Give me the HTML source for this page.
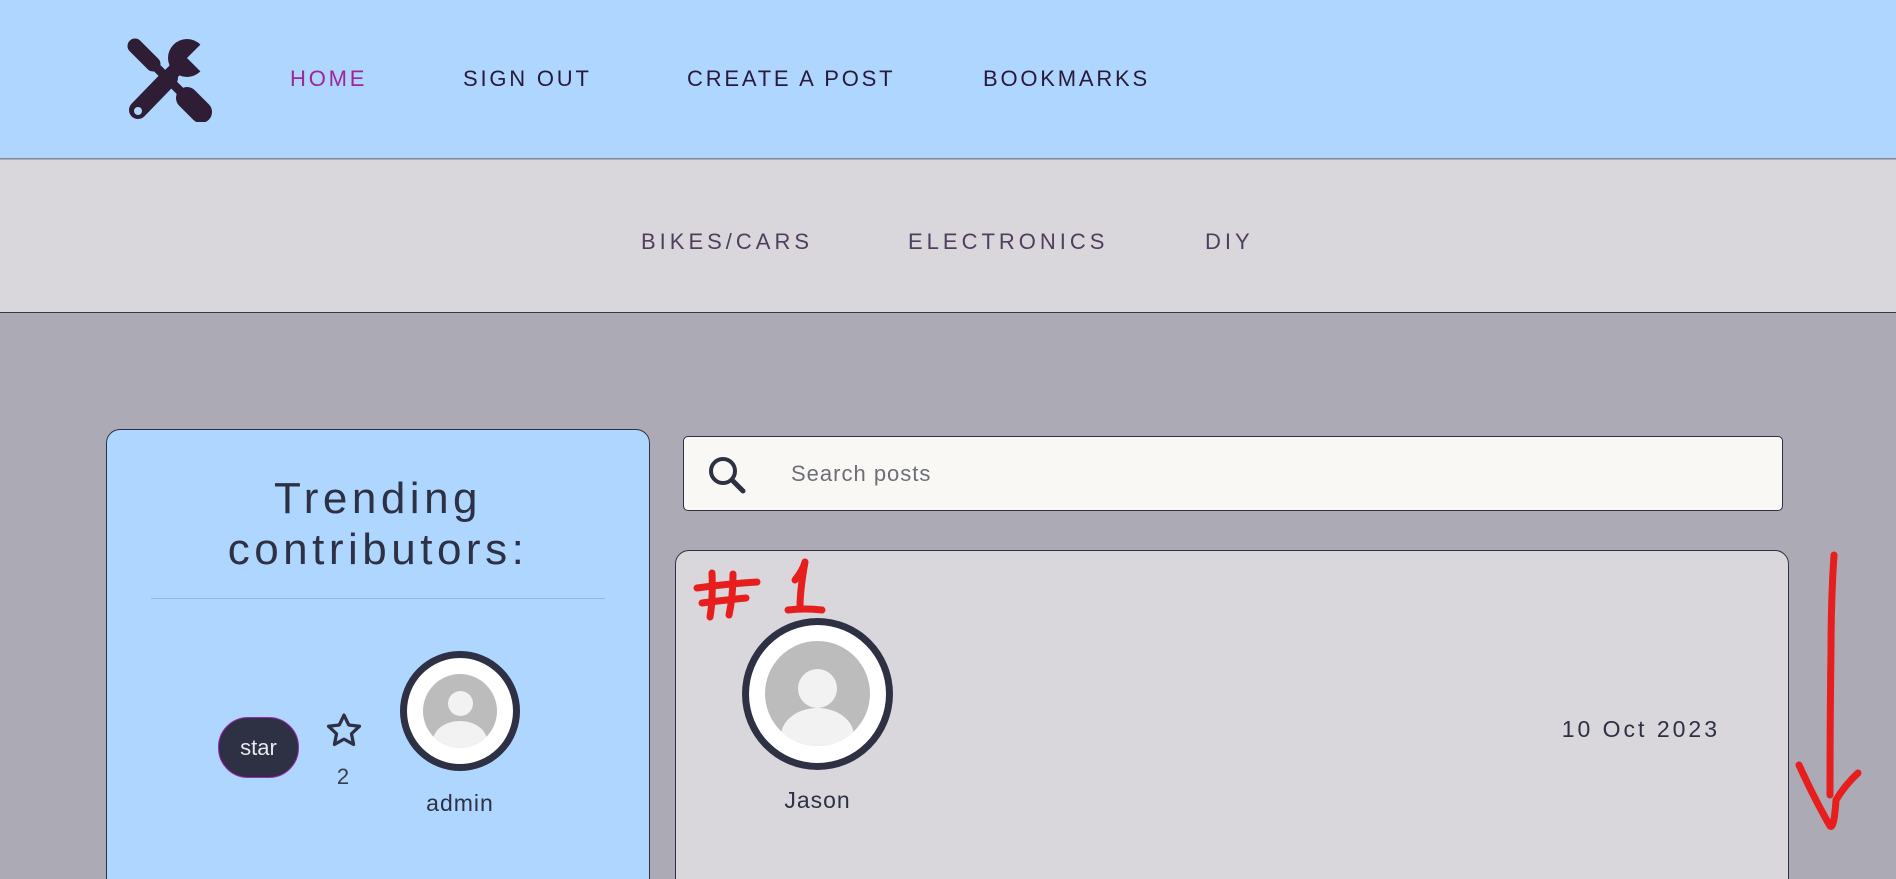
<!DOCTYPE html>
<html><head><meta charset="utf-8"><style>
*{margin:0;padding:0;box-sizing:border-box}
html,body{width:1896px;height:879px;overflow:hidden}
body{background:#acabb5;font-family:"Liberation Sans",sans-serif;position:relative}
#w{position:absolute;left:0;top:0;width:1896px;height:879px;overflow:hidden}
.a{position:absolute}
.nav{font-size:22px;letter-spacing:2.8px;color:#2a1a3a;top:66px}
.sub{font-size:22px;letter-spacing:4px;color:#4f3e5e;top:229px}
.av{position:absolute;border-radius:50%;background:#fff;border:7px solid #2e3044;overflow:hidden}
</style></head><body><div id="w">
<div class="a" style="left:0;top:0;width:1896px;height:159px;background:#aed6ff;border-bottom:1px solid #8a8a99"></div>
<div class="a" style="left:0;top:160px;width:1896px;height:153px;background:#d9d7dc;border-bottom:1px solid #3a3a44"></div>
<svg class="a" style="left:125px;top:36px" width="88" height="86" viewBox="0 0 88 86">
<g stroke="#2f1c35" fill="none" stroke-linejoin="round">
<path d="M10 10 L28 28" stroke-width="15" stroke-linecap="round"/>
<path d="M28 28 L56 56" stroke-width="9"/>
<path d="M62 62 L76 76" stroke-width="22" stroke-linecap="round"/>
<path d="M44 42 L13 74" stroke-width="18" stroke-linecap="round"/>
</g>
<circle cx="62" cy="22" r="19" fill="#2f1c35"/>
<path d="M40 44 L58 26" stroke="#2f1c35" stroke-width="14"/>
<path d="M62 22 L78 6 L94 22 L78 38 Z" fill="#aed6ff"/>
<circle cx="13" cy="75" r="4" fill="#aed6ff"/>
</svg>
<div class="a nav" style="left:290px;color:#a0259a">HOME</div>
<div class="a nav" style="left:463px">SIGN OUT</div>
<div class="a nav" style="left:687px">CREATE A POST</div>
<div class="a nav" style="left:983px">BOOKMARKS</div>
<div class="a sub" style="left:641px">BIKES/CARS</div>
<div class="a sub" style="left:908px">ELECTRONICS</div>
<div class="a sub" style="left:1205px">DIY</div>

<div class="a" style="left:106px;top:429px;width:544px;height:480px;background:#aed6ff;border:1px solid #2e3044;border-radius:14px"></div>
<div class="a" style="left:106px;top:473px;width:544px;text-align:center;font-size:44px;line-height:51px;letter-spacing:4.5px;color:#2e3044">Trending<br>contributors:</div>
<div class="a" style="left:151px;top:598px;width:454px;height:1px;background:#8fb8e0"></div>
<div class="a" style="left:218px;top:717px;width:81px;height:61px;border-radius:30px;background:#2e3044;border:1px solid #9a2ab0;color:#e8e8f0;font-size:22px;text-align:center;line-height:59px">star</div>
<svg class="a" style="left:324px;top:711px" width="40" height="39" viewBox="0 0 24 24"><path d="M12 2.5l2.9 6.1 6.6.8-4.9 4.6 1.3 6.6L12 17.3 6.1 20.6l1.3-6.6L2.5 9.4l6.6-.8z" fill="none" stroke="#2e3044" stroke-width="2" stroke-linejoin="round"/></svg>
<div class="a" style="left:323px;top:764px;width:40px;text-align:center;font-size:22px;color:#3a3c50">2</div>
<div class="av" style="left:400px;top:651px;width:120px;height:120px">
<div class="a" style="left:16px;top:16px;width:74px;height:74px;border-radius:50%;background:#bcbcbc;overflow:hidden">
<div class="a" style="left:25px;top:17px;width:25px;height:25px;border-radius:50%;background:#f2f2f2"></div>
<div class="a" style="left:10px;top:47px;width:54px;height:40px;border-radius:50%;background:#f2f2f2"></div></div></div>
<div class="a" style="left:390px;top:790px;width:140px;text-align:center;font-size:23px;letter-spacing:1px;color:#2e3044">admin</div>

<div class="a" style="left:683px;top:436px;width:1100px;height:75px;background:#f9f8f4;border:1px solid #2e3044;border-radius:5px"></div>
<svg class="a" style="left:707px;top:455px" width="40" height="40" viewBox="0 0 40 40"><circle cx="16" cy="16" r="12" fill="none" stroke="#2e3044" stroke-width="4"/><path d="M25 25 L36 36" stroke="#2e3044" stroke-width="5" stroke-linecap="round"/></svg>
<div class="a" style="left:791px;top:461px;font-size:22px;color:#6e6e78;letter-spacing:1px">Search posts</div>

<div class="a" style="left:675px;top:550px;width:1114px;height:360px;background:#d9d7dc;border:1px solid #2e3044;border-radius:14px"></div>
<div class="av" style="left:742px;top:618px;width:151px;height:152px">
<div class="a" style="left:16px;top:16px;width:105px;height:105px;border-radius:50%;background:#bcbcbc;overflow:hidden">
<div class="a" style="left:33px;top:28px;width:39px;height:39px;border-radius:50%;background:#f2f2f2"></div>
<div class="a" style="left:16px;top:67px;width:73px;height:56px;border-radius:50%;background:#f2f2f2"></div></div></div>
<div class="a" style="left:737px;top:787px;width:161px;text-align:center;font-size:23px;letter-spacing:1px;color:#2e3044">Jason</div>
<div class="a" style="left:1500px;top:716px;width:220px;text-align:right;font-size:23px;letter-spacing:3px;color:#2e3044">10 Oct 2023</div>

<svg class="a" style="left:0;top:0" width="1896" height="879">
<g fill="none" stroke="#e61e1e" stroke-width="7" stroke-linecap="round" stroke-linejoin="round">
<path d="M697 588 Q725 584 757 582"/><path d="M702 603 Q725 600 746 598"/><path d="M712 573 Q713 600 710 617"/><path d="M733 574 Q733 597 729 615"/>
<path d="M795 580 Q803 570 805 562 Q800 590 800 607"/><path d="M788 610 Q805 608 822 610"/>
<path d="M1834 555 Q1831 600 1831 650 Q1830 720 1830 795"/>
<path d="M1799 765 Q1815 800 1830 826 Q1834 830 1836 800 Q1845 785 1858 773"/>
</g></svg>
</div></body></html>
